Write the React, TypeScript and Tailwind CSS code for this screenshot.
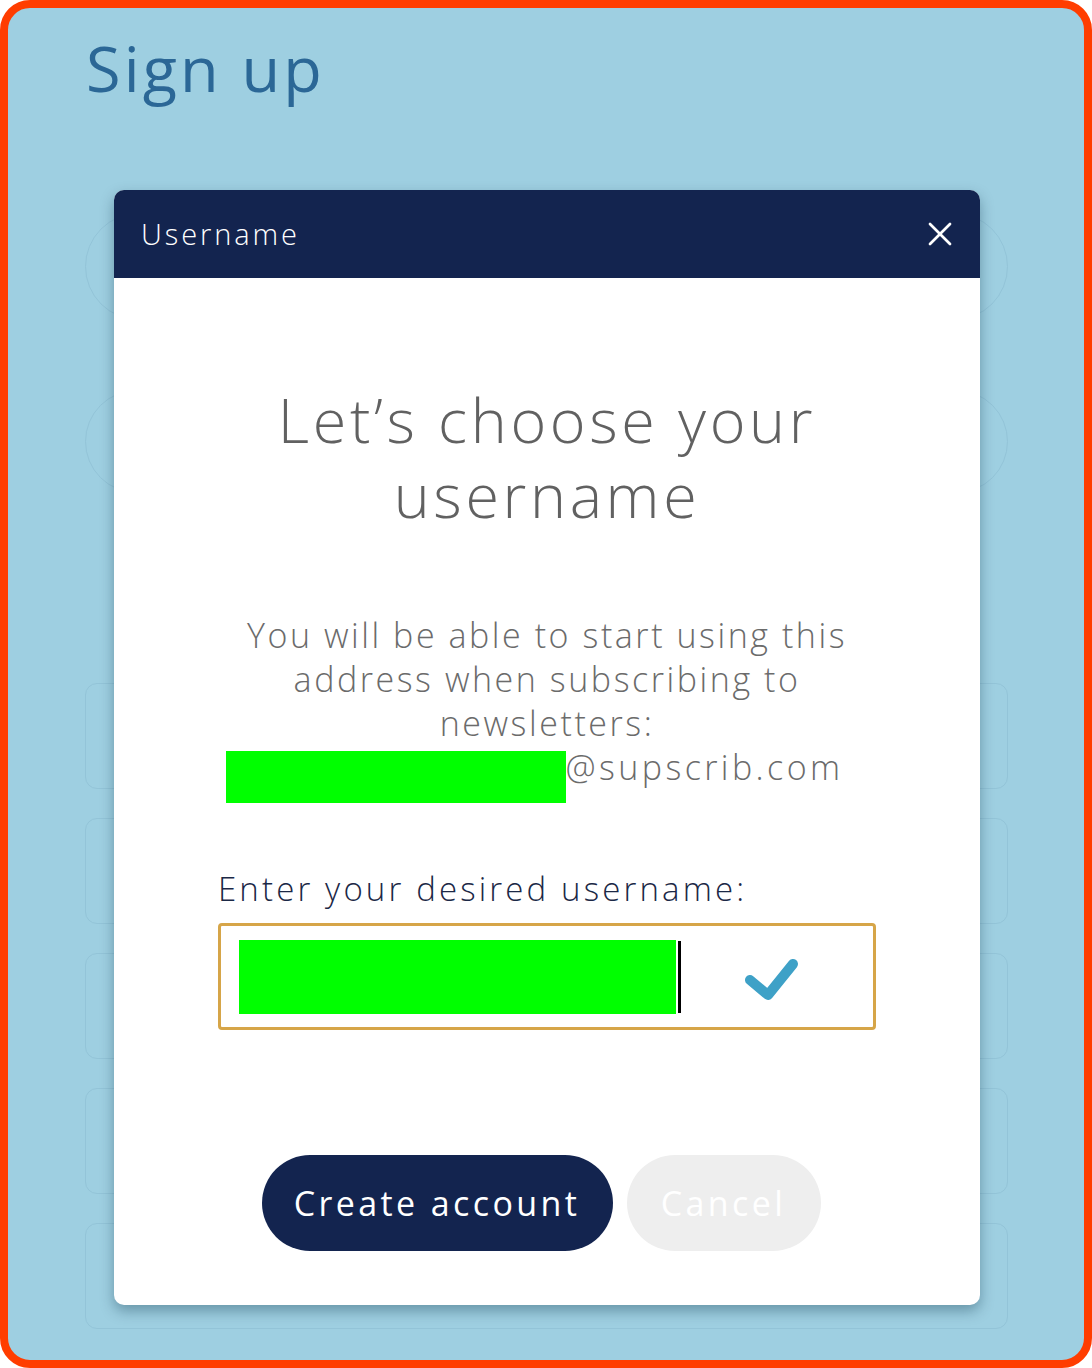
import React from 'react';
import { X } from 'lucide-react';

const font = { fontFamily: '"Open Sans", "Noto Sans", Lato, sans-serif' };

// Faint form fields behind the dialog
const BackgroundForm: React.FC = () => (
  <div className="flex flex-col">
    <div className="h-[107px] rounded-full border border-[#93c4d8] mt-[109px]"></div>
    <div className="h-[103px] rounded-full border border-[#93c4d8] mt-[70px]"></div>
    <div className="mt-[190px] flex flex-col gap-[29px]">
      {[0, 1, 2, 3, 4].map((i) => (
        <div key={i} className="h-[106px] rounded-[12px] border border-[#93c4d8]"></div>
      ))}
    </div>
  </div>
);

export default function App() {
  return (
    <div
      className="w-[1092px] h-[1368px] relative border-8 border-[#ff3d00] rounded-[30px] bg-[#9ecfe1] overflow-hidden"
      style={font}
    >
      <div className="pl-[77px] pr-[76px] pt-[24px]">
        <h1 className="text-[63px] leading-[72px] font-medium tracking-[0.05em] text-[#2b6796] pl-[1px]">Sign up</h1>
        <BackgroundForm />
      </div>

      {/* Dialog */}
      <div className="absolute left-[106px] top-[182px] w-[866px] h-[1115px] rounded-[10px] bg-white shadow-[0_6px_14px_rgba(0,40,60,0.35)] overflow-hidden flex flex-col">
        <div className="h-[88px] bg-[#13244f] flex items-center justify-between pl-[27px] pr-[20px] shrink-0">
          <span className="text-[29px] font-light tracking-[0.1em] text-white">Username</span>
          <X size={40} strokeWidth={1.6} className="text-white" />
        </div>

        <div className="flex flex-col items-center px-[104px] pt-[104px]">
          <h2 className="text-[61px] leading-[75px] font-light tracking-[0.06em] text-[#616161] text-center">
            Let’s choose your<br />username
          </h2>

          <p className="mt-[81px] text-[34px] leading-[44px] font-light tracking-[0.075em] text-[#6b6b6b] text-center whitespace-nowrap">
            You will be able to start using this<br />
            address when subscribing to<br />
            newsletters:
          </p>
          <div className="flex items-start justify-center -ml-[25px]">
            <div className="w-[340px] h-[52px] bg-[#00ff00] mt-[6px]"></div>
            <span className="text-[34px] leading-[44px] font-light tracking-[0.1em] text-[#6b6b6b]">@supscrib.com</span>
          </div>

          <div className="self-stretch mt-[64px]">
            <div className="text-[33px] leading-[44px] font-light tracking-[0.095em] text-[#1b2846] whitespace-nowrap">
              Enter your desired username:
            </div>
            <div className="mt-[12px] h-[107px] border-[3px] border-[#d6a548] rounded-[4px] flex items-center pl-[18px]">
              <div className="w-[437px] h-[74px] bg-[#00ff00]"></div>
              <div className="w-[3px] h-[72px] bg-black ml-[2px]"></div>
              <svg width="58" height="48" viewBox="0 0 58 48" className="ml-[61px] mt-[4px]">
                <polyline
                  points="8,25 26,40 51,9"
                  fill="none"
                  stroke="#3ea1c7"
                  strokeWidth="10"
                  strokeLinecap="round"
                  strokeLinejoin="round"
                />
              </svg>
            </div>
          </div>

          <div className="mt-[125px] flex gap-[14px] -ml-[12px]">
            <button className="w-[351px] h-[96px] rounded-full bg-[#13244f] text-white text-[34px] tracking-[0.1em]">
              Create account
            </button>
            <button className="w-[194px] h-[96px] rounded-full bg-[#eeeeee] text-white text-[34px] tracking-[0.1em]">
              Cancel
            </button>
          </div>
        </div>
      </div>
    </div>
  );
}
